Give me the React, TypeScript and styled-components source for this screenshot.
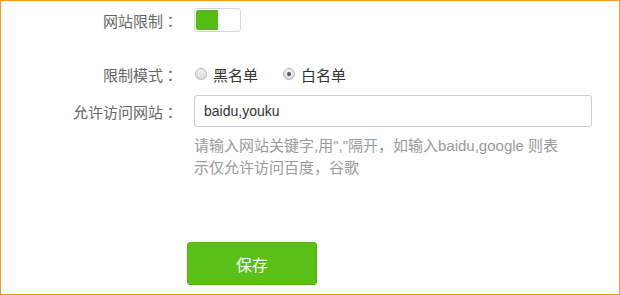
import React, { useState } from 'react'
import styled, { createGlobalStyle } from 'styled-components'

const GlobalStyle = createGlobalStyle`
  html, body {
    margin: 0;
    padding: 0;
    background: #fff;
  }
  body {
    font-family: "Liberation Sans", "Noto Sans CJK SC", sans-serif;
  }
`

const Frame = styled.div`
  box-sizing: border-box;
  width: 620px;
  height: 295px;
  border: 1px solid #f39a1e;
  padding-top: 7px;
  display: flex;
  flex-direction: column;
  overflow: hidden;
`

const Row = styled.div<{ $top?: number }>`
  display: grid;
  grid-template-columns: 183px 1fr;
  column-gap: 10px;
  align-items: center;
  margin-top: ${(p) => p.$top ?? 0}px;
`

const Label = styled.div`
  text-align: right;
  padding-right: 6px;
  font-size: 15px;
  color: #666;
  font-family: "Noto Sans CJK SC", sans-serif;
`

// centred full-width colon, as in the original UI font
const Colon = styled.span`
  font-family: "Noto Sans CJK TC", sans-serif;
`

const Toggle = styled.button<{ $on: boolean }>`
  box-sizing: border-box;
  width: 47px;
  height: 24px;
  padding: 1px;
  border: 1px solid #d6d6d6;
  border-radius: 3px;
  background: #fff;
  display: flex;
  justify-content: ${(p) => (p.$on ? 'flex-start' : 'flex-end')};
  cursor: pointer;
`

const ToggleFill = styled.span`
  width: 22px;
  height: 100%;
  border-radius: 2px 0 0 2px;
  background: #56bd15;
`

const RadioGroup = styled.div`
  display: flex;
  align-items: center;
  gap: 24px;
  height: 24px;
`

const RadioItem = styled.label`
  display: flex;
  align-items: center;
  gap: 6px;
  font-size: 15px;
  color: #333;
  font-family: "Noto Sans CJK SC", sans-serif;
  cursor: pointer;
  padding-left: 1px;
`

const RadioDot = styled.span<{ $checked: boolean }>`
  box-sizing: border-box;
  width: 12px;
  height: 12px;
  border-radius: 50%;
  border: 1px solid #b5b5b5;
  background: linear-gradient(#f0f0f0, #dcdcdc);
  display: flex;
  align-items: center;
  justify-content: center;

  &::after {
    content: '';
    width: 4px;
    height: 4px;
    border-radius: 50%;
    background: ${(p) => (p.$checked ? '#555' : 'transparent')};
  }
`

const Input = styled.input`
  box-sizing: border-box;
  width: 398px;
  height: 32px;
  border: 1px solid #ccc;
  border-radius: 3px;
  padding: 0 9px;
  font-size: 14px;
  color: #333;
  font-family: "Liberation Sans", "Noto Sans CJK SC", sans-serif;
  outline: none;
`

const Hint = styled.p`
  grid-column: 2;
  margin: 0;
  width: 368px;
  font-size: 15px;
  line-height: 22px;
  color: #999;
  font-family: "Liberation Sans", "Noto Sans CJK SC", sans-serif;
`

const SaveButton = styled.button`
  margin-left: 186px;
  margin-top: 63px;
  width: 130px;
  height: 43px;
  border: 1px solid #52b514;
  border-radius: 3px;
  background: #5abf18;
  color: #fff;
  font-size: 16px;
  font-family: "Noto Sans CJK SC", sans-serif;
  cursor: pointer;
`

export default function App() {
  const [enabled, setEnabled] = useState(true)
  const [mode, setMode] = useState<'black' | 'white'>('white')
  const [sites, setSites] = useState('baidu,youku')

  return (
    <>
      <GlobalStyle />
      <Frame>
        <Row>
          <Label>
            网站限制<Colon>：</Colon>
          </Label>
          <Toggle $on={enabled} onClick={() => setEnabled(!enabled)}>
            {enabled && <ToggleFill />}
          </Toggle>
        </Row>
        <Row $top={30}>
          <Label>
            限制模式<Colon>：</Colon>
          </Label>
          <RadioGroup>
            <RadioItem onClick={() => setMode('black')}>
              <RadioDot $checked={mode === 'black'} />
              黑名单
            </RadioItem>
            <RadioItem onClick={() => setMode('white')}>
              <RadioDot $checked={mode === 'white'} />
              白名单
            </RadioItem>
          </RadioGroup>
        </Row>
        <Row $top={9}>
          <Label>
            允许访问网站<Colon>：</Colon>
          </Label>
          <Input value={sites} onChange={(e) => setSites(e.target.value)} />
        </Row>
        <Row $top={8}>
          <Hint>
            请输入网站关键字,用","隔开，如输入baidu,google 则表示仅允许访问百度，谷歌
          </Hint>
        </Row>
        <SaveButton>保存</SaveButton>
      </Frame>
    </>
  )
}
